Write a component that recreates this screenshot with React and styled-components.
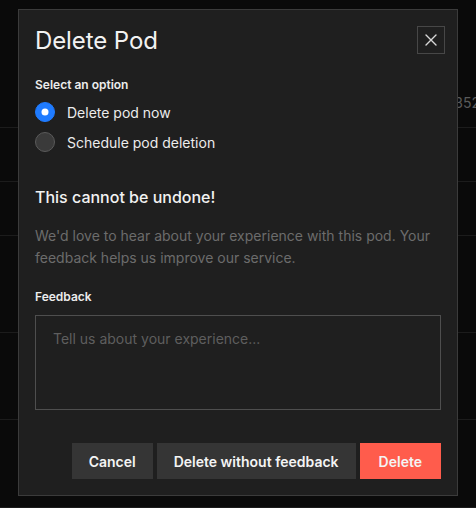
import styled, { createGlobalStyle } from "styled-components";

const GlobalStyle = createGlobalStyle`
  html, body {
    margin: 0;
    padding: 0;
    background: #0a0a0a;
    font-family: Inter, "Liberation Sans", sans-serif;
  }
  * { box-sizing: border-box; }
`;

const rows = [
  { height: 128, text: "1352" },
  { height: 54 },
  { height: 54 },
  { height: 97 },
  { height: 87 },
  { height: 88 },
];

export default function App() {
  return (
    <Page>
      <GlobalStyle />
      <Backdrop>
        {rows.map((row, i) => (
          <BgRow key={i} style={{ height: row.height }}>
            {row.text && <BgCell>{row.text}</BgCell>}
          </BgRow>
        ))}
      </Backdrop>

      <Dialog>
        <Header>
          <Title>Delete Pod</Title>
          <CloseButton aria-label="Close">
            <svg width="14" height="14" viewBox="0 0 14 14" fill="none">
              <path d="M2 2L12 12M12 2L2 12" stroke="#d8d8d8" strokeWidth="1.4" strokeLinecap="round" />
            </svg>
          </CloseButton>
        </Header>

        <Label>Select an option</Label>
        <RadioGroup>
          <RadioRow>
            <Radio checked />
            <RadioText>Delete pod now</RadioText>
          </RadioRow>
          <RadioRow>
            <Radio />
            <RadioText>Schedule pod deletion</RadioText>
          </RadioRow>
        </RadioGroup>

        <Warning>This cannot be undone!</Warning>
        <Description>
          We'd love to hear about your experience with this pod. Your feedback helps us improve our service.
        </Description>

        <Label gap={10}>Feedback</Label>
        <TextArea placeholder="Tell us about your experience..." />

        <Actions>
          <Button>Cancel</Button>
          <Button>Delete without feedback</Button>
          <Button danger>Delete</Button>
        </Actions>
      </Dialog>
    </Page>
  );
}

const Page = styled.div`
  position: relative;
  width: 476px;
  height: 508px;
  overflow: hidden;
`;

const Backdrop = styled.div`
  display: flex;
  flex-direction: column;
`;

const BgRow = styled.div`
  border-bottom: 1px solid #1c1c1c;
  display: flex;
  align-items: flex-end;
  justify-content: flex-end;
  padding-bottom: 16px;
`;

const BgCell = styled.span`
  color: #5a5a5a;
  font-size: 14px;
  line-height: 17px;
  margin-right: -4px;
`;

const Dialog = styled.div`
  position: absolute;
  left: 18px;
  top: 9px;
  width: 440px;
  height: 487px;
  background: #1f1f1f;
  border: 1px solid #3b3b3b;
  padding: 16px;
  display: flex;
  flex-direction: column;
`;

const Header = styled.div`
  display: flex;
  align-items: center;
  justify-content: space-between;
  height: 28px;
  margin-right: -4px;
  margin-bottom: 23px;
`;

const Title = styled.h2`
  margin: 0;
  font-size: 24px;
  font-weight: 400;
  color: #f2f2f2;
  letter-spacing: -0.1px;
`;

const CloseButton = styled.button`
  width: 28px;
  height: 28px;
  padding: 0;
  display: flex;
  align-items: center;
  justify-content: center;
  background: transparent;
  border: 1px solid #474747;
  cursor: pointer;
`;

const Label = styled.div`
  font-size: 12px;
  font-weight: 600;
  color: #ececec;
  line-height: 16px;
  margin-bottom: ${({ gap }) => gap ?? 9}px;
`;

const RadioGroup = styled.div`
  display: flex;
  flex-direction: column;
  gap: 10px;
  margin-bottom: 35px;
`;

const RadioRow = styled.label`
  display: flex;
  align-items: center;
  gap: 12px;
  height: 20px;
`;

const Radio = styled.span`
  width: 20px;
  height: 20px;
  border-radius: 50%;
  flex-shrink: 0;
  position: relative;
  background: ${({ checked }) => (checked ? "#1f7bff" : "#3a3a3a")};
  border: 1px solid ${({ checked }) => (checked ? "#1f7bff" : "#5a5a5a")};

  &::after {
    content: "";
    display: ${({ checked }) => (checked ? "block" : "none")};
    position: absolute;
    left: 50%;
    top: 50%;
    width: 7px;
    height: 7px;
    border-radius: 50%;
    background: #fff;
    transform: translate(-50%, -50%);
  }
`;

const RadioText = styled.span`
  font-size: 14px;
  color: #ececec;
`;

const Warning = styled.div`
  font-size: 16px;
  font-weight: 500;
  color: #f2f2f2;
  line-height: 20px;
  margin-bottom: 18px;
`;

const Description = styled.p`
  margin: 0 0 20px;
  font-size: 14px;
  line-height: 22px;
  color: #6c6c6c;
`;

const TextArea = styled.textarea`
  display: block;
  width: 100%;
  height: 95px;
  resize: none;
  background: #1f1f1f;
  border: 1px solid #4e4e4e;
  padding: 14px 17px;
  font-family: Inter, "Liberation Sans", sans-serif;
  font-size: 14px;
  line-height: 18px;
  color: #e0e0e0;
  outline: none;

  &::placeholder {
    color: #5e5e5e;
  }
`;

const Actions = styled.div`
  margin-top: auto;
  display: flex;
  justify-content: flex-end;
  gap: 4px;
`;

const Button = styled.button`
  height: 36px;
  padding: ${({ danger }) => (danger ? "0 19px" : "0 17px")};
  border: none;
  font-family: Inter, "Liberation Sans", sans-serif;
  font-size: 14px;
  font-weight: 600;
  color: #f4f4f4;
  background: ${({ danger }) => (danger ? "#ff5c4c" : "#353535")};
  cursor: pointer;
`;
